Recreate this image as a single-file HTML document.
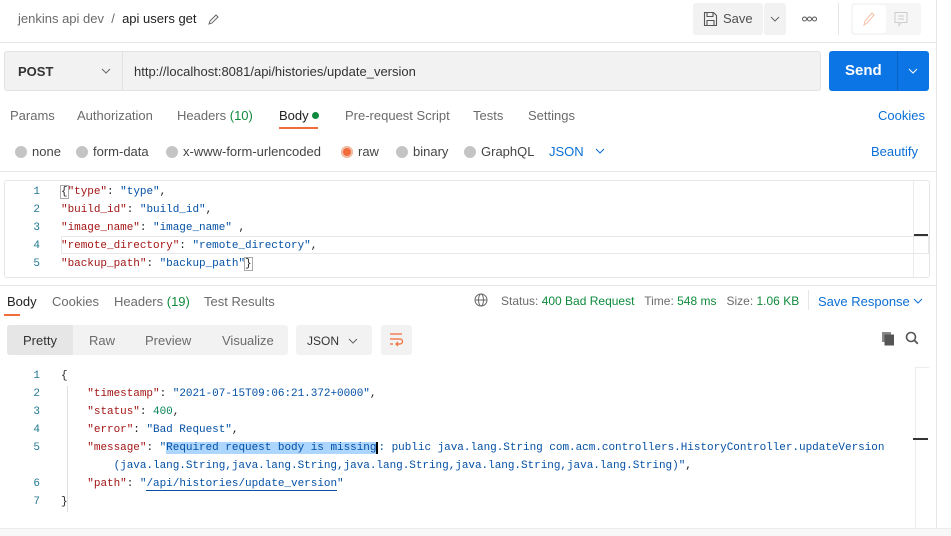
<!DOCTYPE html>
<html><head><meta charset="utf-8"><style>
*{box-sizing:border-box;margin:0;padding:0}
body{width:951px;height:536px;background:#fff;font-family:"Liberation Sans",sans-serif;font-size:13px;color:#212121;position:relative;overflow:hidden}
.a{position:absolute;white-space:nowrap}
.g{color:#6b6b6b}
.grn{color:#0f8a3c}
.blue{color:#0b6fd6}
.mono{font-family:"Liberation Mono",monospace;font-size:11px;letter-spacing:-0.03px}
.k{color:#a31515}.v{color:#0451a5}.n{color:#098658}
.ln{color:#237893;width:20px;text-align:right}
.dot{display:inline-block;width:12px;height:12px;border-radius:50%;background:#c4c4c4;vertical-align:-2px;margin-right:5px}
</style></head><body>
<div class="a" style="left:936px;top:0;width:1px;height:536px;background:#e6e6e6"></div>
<div class="a" style="left:0;top:42px;width:936px;height:1px;background:#e6e6e6"></div>
<div class="a" style="left:18px;top:11px;font-size:13px"><span class="g">jenkins api dev</span> <span class="g">&nbsp;/&nbsp;</span> api users get</div>
<svg class="a" style="left:207px;top:12px" width="14" height="14" viewBox="0 0 14 14"><path d="M2 12l1-3 6-6 2 2-6 6z" fill="none" stroke="#666" stroke-width="1"/></svg>
<div class="a" style="left:693px;top:3px;width:70px;height:32px;background:#f2f2f2;border-radius:3px"></div>
<svg class="a" style="left:703px;top:11px" width="15" height="16" viewBox="0 0 15 16"><path d="M1.5 1.5h9l3 3v10h-12z M4 1.5v4h6v-4 M4 14.5v-5h7v5" fill="none" stroke="#555" stroke-width="1.1"/></svg>
<div class="a" style="left:723px;top:11px;font-size:13px;color:#505050">Save</div>
<div class="a" style="left:764px;top:3px;width:22px;height:32px;background:#f2f2f2;border-radius:3px"></div>
<svg class="a" style="left:770px;top:16px" width="10" height="6" viewBox="0 0 10 6"><path d="M1 1l4 4 4-4" fill="none" stroke="#666"/></svg>
<svg class="a" style="left:802px;top:16px" width="15" height="6" viewBox="0 0 15 6"><circle cx="2.5" cy="3" r="2" fill="none" stroke="#555"/><circle cx="7.5" cy="3" r="2" fill="none" stroke="#555"/><circle cx="12.5" cy="3" r="2" fill="none" stroke="#555"/></svg>
<div class="a" style="left:838px;top:3px;width:1px;height:32px;background:#e6e6e6"></div>
<div class="a" style="left:851px;top:3px;width:70px;height:32px;background:#f6f6f6;border-radius:3px"></div>
<div class="a" style="left:853px;top:5px;width:33px;height:28px;background:#fff;border-radius:3px"></div>
<svg class="a" style="left:862px;top:11px" width="14" height="16" viewBox="0 0 14 16"><path d="M2 14l1-4 7-8 2 2-7 8z" fill="none" stroke="#f5c0a8" stroke-width="1"/></svg>
<svg class="a" style="left:893px;top:11px" width="16" height="16" viewBox="0 0 16 16"><path d="M2 1.5h12v10h-6l-2 3v-3h-4z M5 5h6M5 8h6" fill="none" stroke="#ccc" stroke-width="1"/></svg>

<div class="a" style="left:4px;top:51px;width:817px;height:40px;background:#f2f2f2;border:1px solid #e2e2e2;border-radius:3px"></div>
<div class="a" style="top:52px;width:1px;height:38px;background:#e2e2e2;left:122px"></div>
<div class="a" style="left:18px;top:64px;font-weight:bold;font-size:13px;color:#333">POST</div>
<svg class="a" style="left:101px;top:68px" width="10" height="6" viewBox="0 0 10 6"><path d="M1 1l4 4 4-4" fill="none" stroke="#666"/></svg>
<div class="a" style="left:134px;top:64px;font-size:13px;color:#333">http://localhost:8081/api/histories/update_version</div>
<div class="a" style="left:829px;top:51px;width:100px;height:40px;background:#0c75e6;border-radius:3px"></div>
<div class="a" style="left:897px;top:51px;width:1px;height:40px;background:#0a62c2"></div>
<div class="a" style="left:845px;top:62px;font-size:15px;font-weight:bold;color:#fff">Send</div>
<svg class="a" style="left:908px;top:68px" width="10" height="6" viewBox="0 0 10 6"><path d="M1 1l4 4 4-4" fill="none" stroke="#fff"/></svg>

<div class="a g" style="left:10px;top:108px">Params</div>
<div class="a g" style="left:77px;top:108px">Authorization</div>
<div class="a g" style="left:177px;top:108px">Headers <span class="grn">(10)</span></div>
<div class="a" style="left:279px;top:108px">Body <span style="display:inline-block;width:7px;height:7px;border-radius:50%;background:#0f8a3c;vertical-align:1px"></span></div>
<div class="a" style="left:279px;top:127px;width:39px;height:2px;background:#f26b3a"></div>
<div class="a g" style="left:345px;top:108px">Pre-request Script</div>
<div class="a g" style="left:473px;top:108px">Tests</div>
<div class="a g" style="left:528px;top:108px">Settings</div>
<div class="a blue" style="left:878px;top:108px">Cookies</div>

<div class="a" style="left:15px;top:144px;color:#444"><span class="dot"></span>none</div>
<div class="a" style="left:76px;top:144px;color:#444"><span class="dot"></span>form-data</div>
<div class="a" style="left:166px;top:144px;color:#444"><span class="dot"></span>x-www-form-urlencoded</div>
<div class="a" style="left:341px;top:144px;color:#444"><span class="dot" style="background:#f26b3a;box-shadow:inset 0 0 0 2px #f0c0aa"></span>raw</div>
<div class="a" style="left:396px;top:144px;color:#444"><span class="dot"></span>binary</div>
<div class="a" style="left:464px;top:144px;color:#444"><span class="dot"></span>GraphQL</div>
<div class="a blue" style="left:549px;top:144px">JSON</div>
<svg class="a" style="left:595px;top:148px" width="10" height="6" viewBox="0 0 10 6"><path d="M1 1l4 4 4-4" fill="none" stroke="#0b6fd6"/></svg>
<div class="a blue" style="left:871px;top:144px">Beautify</div>

<div class="a" style="left:0;top:171px;width:936px;height:1px;background:#e6e6e6"></div>
<div class="a" style="left:4px;top:180px;width:926px;height:98px;border:1px solid #e6e6e6;border-radius:3px"></div>
<div class="a" style="left:913px;top:181px;width:1px;height:96px;background:#ececec"></div>
<div class="a" style="left:914px;top:234px;width:14px;height:2px;background:#333"></div>
<div class="a" style="left:61px;top:236px;width:868px;height:18px;border:1px solid #e8e8e8"></div>
<div class="a mono ln" style="left:20px;top:183px;line-height:18px">1<br>2<br>3<br>4<br>5</div>
<div class="a mono" style="left:61px;top:183px;line-height:18px">
<span style="outline:1px solid #aaa">{</span><span class="k">"type"</span>: <span class="v">"type"</span>,<br>
<span class="k">"build_id"</span>: <span class="v">"build_id"</span>,<br>
<span class="k">"image_name"</span>: <span class="v">"image_name"</span> ,<br>
<span class="k">"remote_directory"</span>: <span class="v">"remote_directory"</span>,<br>
<span class="k">"backup_path"</span>: <span class="v">"backup_path"</span><span style="outline:1px solid #aaa">}</span></div>

<div class="a" style="left:0;top:285px;width:936px;height:1px;background:#e6e6e6"></div>
<div class="a" style="left:7px;top:294px">Body</div>
<div class="a" style="left:4px;top:314px;width:16px;height:2px;background:#f26b3a"></div>
<div class="a g" style="left:52px;top:294px">Cookies</div>
<div class="a g" style="left:114px;top:294px">Headers <span class="grn">(19)</span></div>
<div class="a g" style="left:204px;top:294px">Test Results</div>
<svg class="a" style="left:474px;top:293px" width="14" height="14" viewBox="0 0 14 14"><circle cx="7" cy="7" r="6" fill="none" stroke="#666"/><ellipse cx="7" cy="7" rx="2.5" ry="6" fill="none" stroke="#666"/><path d="M1 7h12" stroke="#666"/></svg>
<div class="a g" style="left:501px;top:294px;font-size:12px">Status: <span class="grn">400 Bad Request</span> &nbsp; Time: <span class="grn">548 ms</span> &nbsp; Size: <span class="grn">1.06 KB</span></div>
<div class="a" style="left:808px;top:290px;width:1px;height:20px;background:#e6e6e6"></div>
<div class="a blue" style="left:818px;top:294px">Save Response</div>
<svg class="a" style="left:913px;top:298px" width="10" height="6" viewBox="0 0 10 6"><path d="M1 1l4 4 4-4" fill="none" stroke="#0b6fd6"/></svg>

<div class="a" style="left:7px;top:325px;width:281px;height:30px;background:#f2f2f2;border-radius:3px"></div>
<div class="a" style="left:7px;top:325px;width:66px;height:30px;background:#e6e6e6;border-radius:3px 0 0 3px"></div>
<div class="a" style="left:23px;top:333px;color:#333">Pretty</div>
<div class="a g" style="left:89px;top:333px">Raw</div>
<div class="a g" style="left:145px;top:333px">Preview</div>
<div class="a g" style="left:222px;top:333px">Visualize</div>
<div class="a" style="left:296px;top:325px;width:76px;height:30px;background:#f2f2f2;border-radius:3px"></div>
<div class="a" style="left:307px;top:334px;font-size:12px;color:#333">JSON</div>
<svg class="a" style="left:348px;top:338px" width="10" height="6" viewBox="0 0 10 6"><path d="M1 1l4 4 4-4" fill="none" stroke="#666"/></svg>
<div class="a" style="left:381px;top:325px;width:31px;height:30px;background:#f2f2f2;border-radius:3px"></div>
<svg class="a" style="left:388px;top:331px" width="16" height="18" viewBox="0 0 16 18"><path d="M2 3h12M2 8h10a2.5 2.5 0 010 5H8M10 11l-2 2 2 2M2 13h3" fill="none" stroke="#f26b3a" stroke-width="1.2"/></svg>
<svg class="a" style="left:881px;top:331px" width="14" height="15" viewBox="0 0 14 15"><rect x="1" y="1" width="9" height="10" fill="#888"/><rect x="3.5" y="3.5" width="9.5" height="11" fill="#555"/></svg>
<svg class="a" style="left:905px;top:331px" width="14" height="15" viewBox="0 0 14 15"><circle cx="6" cy="6" r="4.5" fill="none" stroke="#555" stroke-width="1.6"/><path d="M9.3 9.3l3.5 3.5" stroke="#555" stroke-width="1.8"/></svg>

<div class="a" style="left:915px;top:367px;width:1px;height:162px;background:#ececec"></div>
<div class="a" style="left:915px;top:367px;width:14px;height:1px;background:#ececec"></div>
<div class="a" style="left:913px;top:438px;width:15px;height:2px;background:#333"></div>
<div class="a" style="left:0;top:528px;width:951px;height:1px;background:#ececec"></div>
<div class="a" style="left:0;top:529px;width:951px;height:7px;background:#f8f8f8"></div>
<div class="a" style="left:67px;top:386px;width:1px;height:126px;background:#e0e0e0"></div>
<div class="a mono ln" style="left:20px;top:367px;line-height:18px">1<br>2<br>3<br>4<br>5<br><br>6<br>7</div>
<div class="a mono" style="left:61px;top:367px;line-height:18px">{<br>
&nbsp;&nbsp;&nbsp;&nbsp;<span class="k">"timestamp"</span>: <span class="v">"2021-07-15T09:06:21.372+0000"</span>,<br>
&nbsp;&nbsp;&nbsp;&nbsp;<span class="k">"status"</span>: <span class="n">400</span>,<br>
&nbsp;&nbsp;&nbsp;&nbsp;<span class="k">"error"</span>: <span class="v">"Bad Request"</span>,<br>
&nbsp;&nbsp;&nbsp;&nbsp;<span class="k">"message"</span>: <span class="v">"<span style="background:#add6ff;border-right:2px solid #000">Required request body is missing</span>: public java.lang.String com.acm.controllers.HistoryController.updateVersion</span><br>
&nbsp;&nbsp;&nbsp;&nbsp;&nbsp;&nbsp;&nbsp;&nbsp;<span class="v">(java.lang.String,java.lang.String,java.lang.String,java.lang.String,java.lang.String)"</span>,<br>
&nbsp;&nbsp;&nbsp;&nbsp;<span class="k">"path"</span>: <span class="v">"<span style="border-bottom:1px solid #0451a5">/api/histories/update_version</span>"</span><br>
}</div>
</body></html>
